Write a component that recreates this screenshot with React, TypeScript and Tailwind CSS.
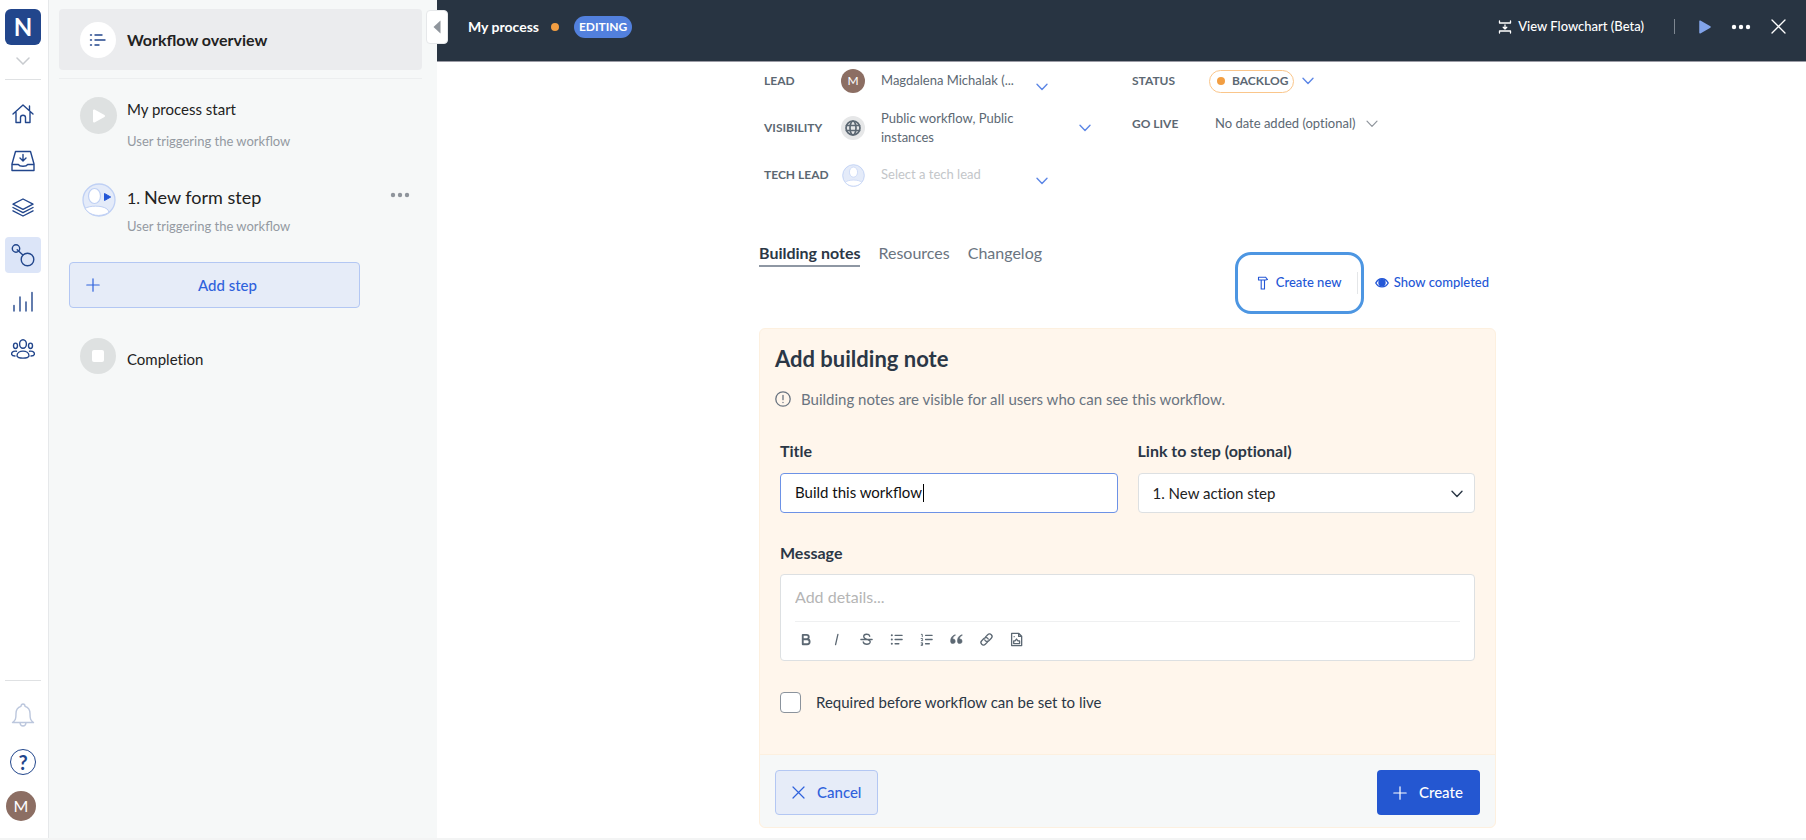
import { useState } from 'react';
import type { ReactNode } from 'react';

function Svg({ size = 24, box = 24, sw = 1.5, className = '', children }: {
  size?: number; box?: number; sw?: number; className?: string; children: ReactNode;
}) {
  return (
    <svg width={size} height={size} viewBox={`0 0 ${box} ${box}`} fill="none" stroke="currentColor"
      strokeWidth={sw} strokeLinecap="round" strokeLinejoin="round" aria-hidden="true" className={`shrink-0 ${className}`}>
      {children}
    </svg>
  );
}

function Chevron({ className = '', sw = 1.4 }: { className?: string; sw?: number }) {
  return (
    <svg width="12" height="8" viewBox="0 0 12 8" fill="none" stroke="currentColor" strokeWidth={sw}
      strokeLinecap="round" strokeLinejoin="round" aria-hidden="true" className={`shrink-0 pointer-events-none ${className}`}>
      <path d="M1 1.2 6 6.4 11 1.2" />
    </svg>
  );
}

function Person({ size, trigger = false }: { size: number; trigger?: boolean }) {
  return (
    <svg width={size} height={size} viewBox="0 0 34 34" aria-hidden="true" className="shrink-0">
      <circle cx="17" cy="17" r="16" fill="#e4ebf9" stroke="#bfd0f4" strokeWidth="1.3" />
      {trigger ? (
        <>
          <ellipse cx="12.5" cy="13" rx="6" ry="7.5" fill="#fff" stroke="#bfd0f4" strokeWidth="1.2" />
          <path d="M3 25.5C7 22.5 20 22 25 26c1.500 1.300 1.800 2.600 1.500 3.700C18 34.500 8 33 3 25.500Z" fill="#fff" stroke="#bfd0f4" strokeWidth="1" />
          <path d="M22.500 10.500v7l6.200-3.500Z" fill="#2457d6" stroke="#2457d6" strokeWidth="1" strokeLinejoin="round" />
        </>
      ) : (
        <>
          <ellipse cx="17" cy="12" rx="6" ry="7.500" fill="#fff" stroke="#cbd8f6" strokeWidth="1.300" />
          <path d="M5 27.500C7 22.500 27 22.500 29 27.500 23 34.500 11 34.500 5 27.500Z" fill="#fff" stroke="#cbd8f6" strokeWidth="1.300" />
        </>
      )}
    </svg>
  );
}

const navItems: { label: string; icon: ReactNode }[] = [
  { label: 'Home', icon: <><path d="M2 12 12 3l10 9M18.500 4v4.500M5 10.500V20.500h4.500v-5c0-3 5-3 5 0v5H19V10.500" /></> },
  { label: 'Inbox', icon: <><path d="M4.500 2.500h15L23 15v6.500H1V15Z" /><path d="M1.500 15.500h6c1.200 2.400 7.800 2.400 9 0h6M12 5.500v6M9 9l3 3 3-3" /></> },
  { label: 'Templates', icon: <><path d="m12 3 10 5.200-10 5.200L2 8.200Z" /><path d="m2 11.500 10 5.200 10-5.200M2 14.800 12 20l10-5.200" /></> },
  { label: 'Workflows', icon: <><circle cx="5" cy="5.500" r="3.700" /><circle cx="16.500" cy="16.500" r="6.300" /><path d="m6.200 6.700 5.700 5.200" /></> },
  { label: 'Reports', icon: <path d="M3 15.500V21M9 7v14M15 12v9M21 2.500V21" /> },
  { label: 'People', icon: <><ellipse cx="12" cy="7" rx="3.400" ry="4.300" /><ellipse cx="4.500" cy="8.800" rx="2" ry="2.700" /><ellipse cx="19.500" cy="8.800" rx="2" ry="2.700" /><path d="M6 19c0-6.500 12-6.500 12 0-1 2.800-11 2.800-12 0ZM4 19c-4 0-4-2.500-2.500-4 .8-.8 2.500-1 4-.8M20 19c4 0 4-2.500 2.500-4-.8-.8-2.500-1-4-.8" /></> },
];

const tabs = ['Building notes', 'Resources', 'Changelog'];

const tools: { label: string; icon: ReactNode }[] = [
  { label: 'Bold', icon: <path strokeWidth="2" d="M4 3h4c3.200 0 3.200 4.700 0 4.700H4zM4 7.700h4.700c3.500 0 3.500 5.300 0 5.300H4z" /> },
  { label: 'Italic', icon: <path d="M9.500 2.500 7 13.500" /> },
  { label: 'Strikethrough', icon: <path d="M11.500 4.500c-.8-3-6.500-2.700-6.500.3 0 3.700 7 2.200 7 5.700 0 3.500-7 3.300-7.500 0M2 8h12" /> },
  { label: 'Bulleted list', icon: <><path d="M6.500 3.500H14M6.500 8H14M6.500 12.500h4" /><path strokeWidth="2.200" d="M3 3.500h.01M3 8h.01M3 12.500h.01" /></> },
  { label: 'Numbered list', icon: <><path d="M7 3.500h7M7 8h7M7 12.500h4" /><path strokeWidth="1" d="M2.500 2.500h1v2.500M2.300 7h1.500v1L2.500 9.200h1.500M2.300 11.500h1.500v2.800H2.300M2.500 13h1.300" /></> },
  { label: 'Quote', icon: <path fill="currentColor" strokeWidth="0.600" d="M6.300 3C3 4 1.700 6.500 1.700 10a2.500 2.500 0 1 0 2.200-2.600C4 5.600 4.800 4.500 6.600 3.700ZM13.600 3C10.300 4 9 6.500 9 10a2.500 2.500 0 1 0 2.200-2.600c.1-1.800.9-2.900 2.700-3.700Z" /> },
  { label: 'Link', icon: <path d="m7 5.200 2.300-2.300c2.500-2.500 6.300 1.300 3.800 3.800L10.800 9C9 10.700 7 10.200 6.200 8.500M9 10.800l-2.300 2.300c-2.500 2.500-6.300-1.300-3.800-3.800L5.200 7C7 5.300 9 5.800 9.800 7.500" /> },
  { label: 'Attach image', icon: <><path d="M2.800 1.500h7.700l3 3v10H2.800ZM10.300 1.700v3h3" /><path d="M5 12.300h6.300V9.500H9.500L8 7.500 6.500 9.500H5Z" /><path d="M5.500 5h.01" /></> },
];

const labelCls = 'text-xs font-bold text-[#5c6873]';

function StepText({ title, sub }: { title: ReactNode; sub: string }) {
  return (
    <div className="flex min-w-0 flex-1 flex-col">
      <h2 className="text-[15px] leading-6 text-[#222]">{title}</h2>
      <p className="mt-2 text-[13px] leading-6 text-[#949aa2]">{sub}</p>
    </div>
  );
}

function Rail() {
  return (
    <aside className="flex w-[49px] shrink-0 flex-col items-center border-r border-[#e6e8ea] bg-white pr-0.5 pt-[9px] pb-[17px]">
      <a href="#home" className="flex size-9 items-center justify-center rounded-md bg-[#22468c] text-2xl font-bold text-white">N</a>
      <button type="button" aria-label="Switch workspace" className="mt-2.5 flex h-3 items-center text-[#c8cbcf]">
        <svg width="14" height="8" viewBox="0 0 14 8" fill="none" stroke="currentColor" strokeWidth="1.500" strokeLinecap="round" aria-hidden="true">
          <path d="m1 1 6 6 6-6" />
        </svg>
      </button>
      <hr className="mt-3 w-9 border-[#dfe1e3]" />
      <nav className="mt-4 flex flex-col gap-[11px]">
        {navItems.map(item => (
          <a key={item.label} href={`#${item.label.toLowerCase()}`} aria-label={item.label}
            className={`flex size-9 items-center justify-center rounded text-[#22468c] ${item.label === 'Workflows' ? 'bg-[#dce5f8]' : ''}`}>
            <Svg size={24} sw={1.4}>{item.icon}</Svg>
          </a>
        ))}
      </nav>
      <hr className="mt-auto w-9 border-[#dfe1e3]" />
      <button type="button" aria-label="Notifications" className="mt-[22px] text-[#bcc7dd]">
        <Svg size={24} sw={1.4}>
          <path d="M1.500 19.500c3-2 3.500-3.500 3.500-9C5 6.500 7.500 4 10 3.300c0-3 4-3 4 0 2.500.7 5 3.200 5 7.200 0 5.500.5 7 3.500 9ZM9 20c.5 4 5.500 4 6 0" />
        </Svg>
      </button>
      <button type="button" aria-label="Help" className="mt-[22px] flex size-[26px] items-center justify-center rounded-full border border-[#22468c] text-xl leading-none font-bold text-[#22468c]">?</button>
      <button type="button" aria-label="Account" className="mt-4 mr-1 flex size-[30px] items-center justify-center rounded-full bg-[#8c6e63] text-base text-white">M</button>
    </aside>
  );
}

function StepsPanel() {
  return (
    <section className="relative w-[388px] shrink-0 bg-[#f6f8f8] pt-[9px] pr-[15px] pl-2.5">
      <a href="#overview" className="flex h-[61px] items-center gap-[11px] rounded bg-[#ebecee] pl-[21px] text-base font-bold text-[#222]">
        <span className="flex size-9 items-center justify-center rounded-full bg-white text-[#22468c]">
          <Svg size={18} box={18} sw={1.400}>
            <path d="M6 4h7M6 9h10M6 14h4M1.500 4h1M1.500 9h1M1.500 14h1" />
          </Svg>
        </span>
        Workflow overview
      </a>
      <hr className="mt-2 border-[#eceeef]" />

      <div className="mt-[18px] flex gap-2.5 pl-[21px]">
        <span className="flex size-[37px] items-center justify-center rounded-full bg-[#dee1e1] text-white">
          <svg width="14" height="14" viewBox="0 0 14 14" fill="currentColor" stroke="currentColor" strokeLinejoin="round" strokeWidth="2" aria-hidden="true"><path d="M2 1.500v11L12 7Z" /></svg>
        </span>
        <StepText title="My process start" sub="User triggering the workflow" />
      </div>

      <div className="mt-7 flex gap-2.5 pl-[21px]">
        <span className="flex size-[37px] items-center justify-center"><Person size={34} trigger /></span>
        <div className="flex min-w-0 flex-1 flex-col pt-1">
          <h2 className="flex items-baseline gap-1 leading-6 text-[#222]">1. <span className="text-lg leading-6">New form step</span></h2>
          <p className="mt-1 text-[13px] leading-6 text-[#949aa2]">User triggering the workflow</p>
        </div>
        <button type="button" aria-label="Step options" className="mr-3 h-7 text-[#8f959c]">
          <svg width="20" height="6" viewBox="0 0 20 6" fill="currentColor" aria-hidden="true"><circle cx="3" cy="3" r="2.200" /><circle cx="10" cy="3" r="2.200" /><circle cx="17" cy="3" r="2.200" /></svg>
        </button>
      </div>

      <button type="button" className="mt-6 ml-2.5 flex h-[46px] w-[291px] items-center rounded border border-[#b3c7f3] bg-[#e6ecf8] pr-6 pl-4 text-[15px] font-medium text-[#2f62dc]">
        <Svg size={14} box={14} sw={1.2}><path d="M7 .800v12.400M.800 7h12.400" /></Svg>
        <span className="flex-1 pl-5">Add step</span>
      </button>

      <div className="mt-[30px] flex items-center gap-[11px] pl-[21px]">
        <span className="flex size-9 items-center justify-center rounded-full bg-[#dee1e1]"><span className="size-3 rounded-xs bg-white" /></span>
        <h2 className="pt-1.5 text-[15px] leading-6 text-[#222] [font-variant-ligatures:none]">Completion</h2>
      </div>

      <button type="button" aria-label="Collapse panel" className="absolute top-2.5 -right-[11px] flex h-[34px] w-[22px] items-center justify-center rounded border border-[#e6e8ea] bg-white text-[#8f959c]">
        <svg width="8" height="14" viewBox="0 0 8 14" fill="currentColor" aria-hidden="true"><path d="M7.500.500v13L.500 7Z" /></svg>
      </button>
    </section>
  );
}

function TopBar() {
  return (
    <header className="flex h-[62px] items-center border-b border-[#9b9ba5] bg-[#283442] pr-5 pb-2 pl-[31px] text-[13px] text-white">
      <h1 className="text-sm font-bold">My process</h1>
      <span className="ml-3 size-2 rounded-full bg-[#f29e42]" />
      <span className="ml-[15px] flex h-[22px] items-center rounded-full bg-[#5280dd] px-[5px] text-xs font-bold">EDITING</span>
      <button type="button" className="ml-auto flex items-center gap-1.5 font-medium">
        <Svg size={14} box={14} sw={1.300}><path d="M1.500 1v2h11V1M1.500 13v-2h11v2M7 5v4M5.200 7.300 7 9l1.800-1.700" /></Svg>
        View Flowchart (Beta)
      </button>
      <span className="ml-[30px] h-[15px] w-px bg-[#7e8791]" />
      <button type="button" aria-label="Run" className="ml-6 text-[#82a4ea]">
        <svg width="12" height="14" viewBox="0 0 12 14" fill="currentColor" stroke="currentColor" strokeWidth="1.500" strokeLinejoin="round" aria-hidden="true"><path d="M1 1.200v11.600L11 7Z" /></svg>
      </button>
      <button type="button" aria-label="More" className="ml-5">
        <svg width="20" height="6" viewBox="0 0 20 6" fill="currentColor" aria-hidden="true"><circle cx="3" cy="3" r="2.200" /><circle cx="10" cy="3" r="2.200" /><circle cx="17" cy="3" r="2.200" /></svg>
      </button>
      <button type="button" aria-label="Close" className="ml-5">
        <Svg size={15} box={15} sw={1.300}><path d="m1 1 13 13M14 1 1 14" /></Svg>
      </button>
    </header>
  );
}

function Details() {
  return (
    <div className="flex items-start pl-[5px]">
      <div className="flex w-[368px] flex-col gap-[9px]">
        <div className="flex h-[38px] items-center">
          <label htmlFor="lead" className={`w-[77px] ${labelCls}`}>LEAD</label>
          <span className="flex size-6 items-center justify-center rounded-full bg-[#8c6e63] text-xs text-white">M</span>
          <select id="lead" className="ml-4 w-[152px] appearance-none truncate bg-transparent text-[13px] text-[#5c6873]">
            <option>Magdalena Michalak (...</option>
          </select>
          <Chevron className="mt-3 ml-[3px] text-[#5d87e6]" />
        </div>
        <div className="flex h-[38px] items-center">
          <span className={`w-[77px] ${labelCls}`}>VISIBILITY</span>
          <span className="flex size-6 items-center justify-center rounded-full bg-[#e6e7e8] text-[#5c6873]">
            <Svg size={16} box={16} sw={1.700}><circle cx="8" cy="8" r="7" /><ellipse cx="8" cy="8" rx="3" ry="7" /><path d="M1.500 5.500h13M1.500 10.500h13" /></Svg>
          </span>
          <button type="button" className="ml-4 flex w-[210px] items-center justify-between text-left text-[13px] leading-[19px] text-[#5c6873]">
            <span className="w-[150px]">Public workflow, Public instances</span>
            <Chevron className="text-[#5d87e6]" />
          </button>
        </div>
        <div className="flex h-[38px] items-center">
          <label htmlFor="tech-lead" className={`w-[77px] ${labelCls}`}>TECH LEAD</label>
          <span className="flex size-6 items-center justify-center"><Person size={23} /></span>
          <select id="tech-lead" className="ml-4 w-[152px] appearance-none bg-transparent text-[13px] text-[#c3c6c9]">
            <option>Select a tech lead</option>
          </select>
          <Chevron className="mt-3 ml-[3px] text-[#5d87e6]" />
        </div>
      </div>

      <div className="flex flex-1 flex-col gap-[19px] pt-[7px]">
        <div className="flex h-6 items-center">
          <label htmlFor="status" className={`w-[77px] ${labelCls}`}>STATUS</label>
          <span className="flex h-[23px] w-[85px] items-center gap-[7px] rounded-full border border-[#fac68b] pl-[7px]">
            <span className="size-2 shrink-0 rounded-full bg-[#f29e42]" />
            <select id="status" className={`appearance-none bg-transparent ${labelCls}`}>
              <option>BACKLOG</option>
            </select>
          </span>
          <Chevron className="ml-2 text-[#5d87e6]" />
        </div>
        <div className="flex h-6 items-center">
          <label htmlFor="go-live" className={`w-[83px] ${labelCls}`}>GO LIVE</label>
          <select id="go-live" className="appearance-none bg-transparent text-[13px] text-[#5c6873] [font-variant-ligatures:none]">
            <option>No date added (optional)</option>
          </select>
          <Chevron className="ml-2.5 text-[#8f959c]" sw={1.200} />
        </div>
      </div>
    </div>
  );
}

function NoteForm() {
  const [title, setTitle] = useState('Build this workflow');

  return (
    <form className="mt-3.5 rounded-md border border-[#fdf0df] bg-[#fff6ec] text-[#2b3746]">
      <div className="px-5 pt-4 pb-10">
        <h2 className="-ml-[5px] text-[22px] leading-7 font-bold">Add building note</h2>
        <p className="mt-3.5 -ml-[5px] flex items-center gap-2.5 text-[15px] leading-6 text-[#6a7480]">
          <Svg size={16} box={16} sw={1.300}><circle cx="8" cy="8" r="7.200" /><path d="M8 4.300v4.400M8 11.300v.2" /></Svg>
          Building notes are visible for all users who can see this workflow.
        </p>

        <div className="mt-7 grid grid-cols-2 gap-5">
          <div className="flex flex-col gap-2.5">
            <label htmlFor="note-title" className="leading-6 font-bold">Title</label>
            <div className="relative">
              <input id="note-title" value={title} onChange={e => setTitle(e.target.value)}
                className="block h-10 w-full rounded border border-[#6d92e6] bg-white px-3.5 pb-0.5 text-[15px] text-[#111] outline-none" />
              {/* caret */}
              <span className="absolute top-[11px] left-[143px] h-[18px] w-px bg-black" />
            </div>
          </div>
          <div className="flex flex-col gap-2.5">
            <label htmlFor="note-step" className="leading-6 font-bold [font-variant-ligatures:none]">Link to step (optional)</label>
            <div className="relative">
              <select id="note-step" className="block h-10 w-full appearance-none rounded border border-[#dde0e2] bg-white px-3.5 text-[15px] text-[#222] [font-variant-ligatures:none]">
                <option>1. New action step</option>
              </select>
              <Chevron className="absolute top-[17px] right-3" sw={1.400} />
            </div>
          </div>
        </div>

        <label htmlFor="note-message" className="mt-7 block leading-6 font-bold">Message</label>
        <div className="mt-[9px] rounded border border-[#dde0e2] bg-white px-3.5">
          <textarea id="note-message" rows={1} placeholder="Add details..."
            className="block h-[46px] w-full resize-none py-2.5 text-base leading-6 outline-none placeholder:text-[#b5b5b5]" />
          <div className="flex h-[39px] items-center gap-3.5 border-t border-[#eff0f1] pb-1 pl-[3px] text-[#5c6873]">
            {tools.map(t => (
              <button key={t.label} type="button" aria-label={t.label} className="flex w-4 justify-center">
                <Svg size={15} box={16} sw={1.400}>{t.icon}</Svg>
              </button>
            ))}
          </div>
        </div>

        <label className="mt-[29px] flex items-center gap-[15px] text-[15px] leading-6">
          <input type="checkbox" className="size-[21px] appearance-none rounded border border-[#8b939c] bg-white" />
          Required before workflow can be set to live
        </label>
      </div>

      <div className="flex items-center justify-between rounded-b-md border-t border-[#fdf0df] bg-[#f6f8f8] px-[15px] pt-[15px] pb-3 text-[15px] font-medium">
        <button type="button" className="flex h-[45px] w-[103px] items-center gap-3 rounded border border-[#b3c7f3] bg-[#e6ecf8] pl-4 text-[#2f62dc]">
          <Svg size={13} box={13} sw={1.200}><path d="m1 1 11 11M12 1 1 12" /></Svg>
          Cancel
        </button>
        <button type="submit" className="flex h-[45px] w-[103px] items-center gap-3 rounded bg-[#2457d1] pl-4 text-white">
          <Svg size={14} box={14} sw={1.200}><path d="M7 .800v12.400M.800 7h12.400" /></Svg>
          Create
        </button>
      </div>
    </form>
  );
}

export default function App() {
  const [tab, setTab] = useState(tabs[0]);

  return (
    <div className="flex min-h-screen flex-col border-b-2 border-[#f3f4f4] bg-white font-[Lato,sans-serif]">
      <div className="flex flex-1">
        <Rail />
        <StepsPanel />
        <div className="min-w-0 flex-1">
          <TopBar />
          <main className="pb-2.5 pl-3">
            <div className="mx-auto max-w-[737px]">
              <Details />

              <div className="mt-[47px] flex items-start justify-between pr-[7px]">
                <div role="tablist" className="flex gap-[18px] text-base leading-6">
                  {tabs.map(t => (
                    <button key={t} type="button" role="tab" aria-selected={tab === t} onClick={() => setTab(t)}
                      className={tab === t ? 'border-b-2 border-[#8e97a3] font-bold text-[#2b3746]' : 'border-b-2 border-transparent text-[#6a7480]'}>
                      {t}
                    </button>
                  ))}
                </div>
                <div className="mt-[11px] flex items-center gap-[11px] text-[13px] font-medium text-[#2457d6]">
                  <div className="flex h-[62px] w-[129px] items-center justify-between rounded-2xl border-3 border-[#4d96e2] pr-[3px] pl-[18px]">
                    <button type="button" className="flex items-center gap-1.5">
                      <Svg size={14} box={14} sw={1.100}><path d="M2.500 1.200h7l2 2.300-2 .500h-7ZM5.200 4v9h3.300V4" /></Svg>
                      Create new
                    </button>
                    <span className="h-[22px] w-px bg-[#e4e6e8]" />
                  </div>
                  <button type="button" className="flex items-center gap-[5px]">
                    <Svg size={14} box={14} sw={1.400}><path d="M.800 7C3.500 1.300 10.500 1.300 13.200 7 10.500 12.200 3.500 12.200.800 7Z" /><circle cx="7" cy="6.800" r="3" fill="currentColor" /></Svg>
                    Show completed
                  </button>
                </div>
              </div>

              <NoteForm />
            </div>
          </main>
        </div>
      </div>
    </div>
  );
}
